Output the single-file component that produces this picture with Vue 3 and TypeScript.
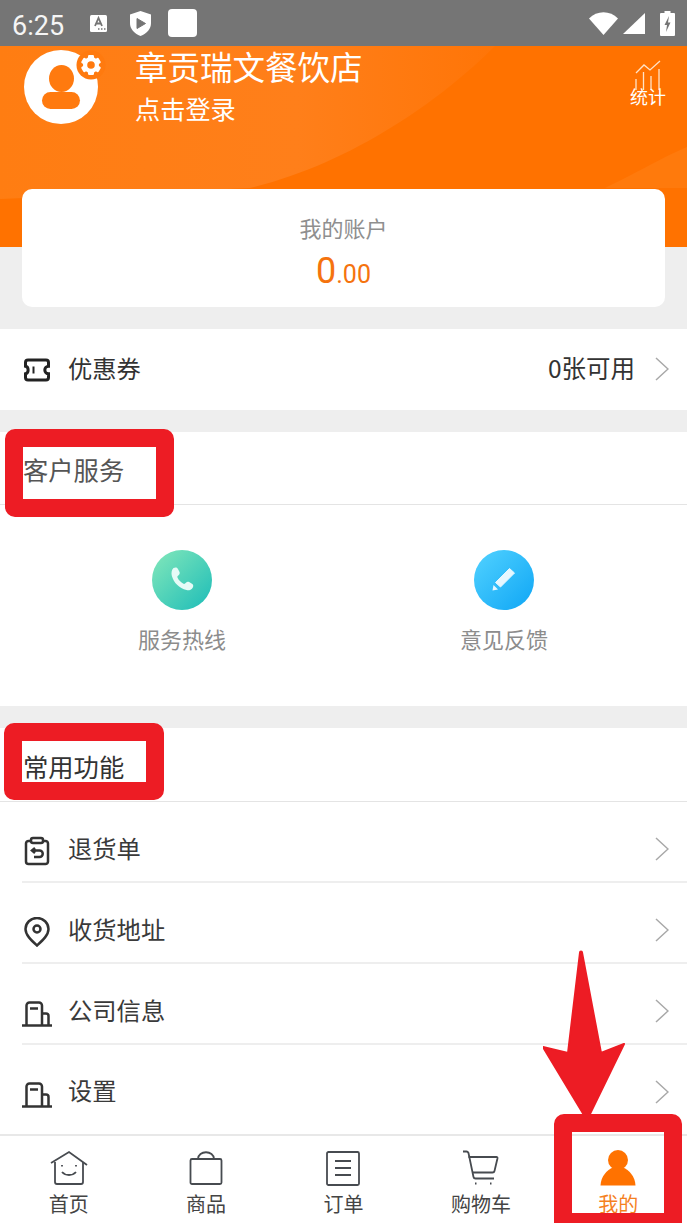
<template>
  <div class="page">
    <div class="status-bar">
      <span class="clock">6:25</span>
      <svg class="st-a" viewBox="0 0 17 17">
        <rect width="17" height="17" rx="1.5" fill="#fff" />
        <path d="M5 11 8.5 3 12 11M6.3 8.5h4.4" fill="none" stroke="#757575" stroke-width="1.8" />
        <path d="M8 14h1.5M11 14h1.5M14 14h1.5" stroke="#757575" stroke-width="1.4" />
      </svg>
      <svg class="st-shield" viewBox="0 0 21 25">
        <path d="M10.5 0 21 3.5V12c0 6-4 10.500-10.500 13C4 22.500 0 18 0 12V3.500z" fill="#fff" />
        <path d="M7 7.500 15.500 12.500 7 17.500z" fill="#757575" stroke="#757575" stroke-linejoin="round" />
      </svg>
      <span class="st-square"></span>
      <span class="status-space"></span>
      <svg class="st-wifi" viewBox="0 0 29 23"><path d="M0 6.500C8-2 21-2 29 6.500L14.500 23z" fill="#fff" /></svg>
      <svg class="st-signal" viewBox="0 0 22 21"><path d="M22 0v21H0z" fill="#fff" /></svg>
      <svg class="st-battery" viewBox="0 0 15 25">
        <path d="M4.500 0h6v2H14a1 1 0 0 1 1 1v21a1 1 0 0 1-1 1H1a1 1 0 0 1-1-1V3a1 1 0 0 1 1-1h3.500z" fill="#fff" />
        <path d="M9 5 4.500 14H7l-1 7 4.500-9.500H8z" fill="#757575" />
      </svg>
    </div>

    <header class="hero">
      <svg class="hero-bg" viewBox="0 0 687 201" preserveAspectRatio="none">
        <defs>
          <linearGradient id="heroLight" x1="0" y1="0" x2="1" y2="0">
            <stop offset="0" stop-color="#ff7d12" />
            <stop offset="0.6" stop-color="#ff7f1a" />
            <stop offset="1" stop-color="#ff7507" />
          </linearGradient>
        </defs>
        <path d="M0 0H495C440 55 350 118 250 142L0 153z" fill="url(#heroLight)" />
        <path d="M605 142C640 125 665 110 687 101V142z" fill="#ff7a0c" />
      </svg>
      <div class="hero-row">
        <svg class="avatar" viewBox="0 0 84 74">
          <circle cx="37" cy="37" r="37" fill="#fff" />
          <ellipse cx="37.500" cy="28.500" rx="12.500" ry="13.500" fill="#ff7a0f" />
          <rect x="18" y="42" width="38" height="17" rx="8.500" fill="#ff7a0f" />
          <circle cx="67" cy="15" r="14.500" fill="#ff7a0f" />
          <g fill="#fff">
            <circle cx="67" cy="15" r="8" />
            <rect x="64" y="5" width="6" height="20" rx="1.200" />
            <rect x="64" y="5" width="6" height="20" rx="1.200" transform="rotate(60 67 15)" />
            <rect x="64" y="5" width="6" height="20" rx="1.200" transform="rotate(120 67 15)" />
          </g>
          <circle cx="67" cy="15" r="3.800" fill="#ff7a0f" />
        </svg>
        <div class="hero-text">
          <div class="shop-name">章贡瑞文餐饮店</div>
          <div class="login">点击登录</div>
        </div>
        <div class="stats">
          <svg class="stats-icon" viewBox="0 0 26 30" fill="none" stroke="#ffe3c8" stroke-width="1.300">
            <path d="M1 13 9 5l6 5L25 1" />
            <path d="M1 19v11M8.500 12v18M16 16v14M24 9v21" />
          </svg>
          <span class="stats-label">统计</span>
        </div>
      </div>
    </header>

    <section class="account-card">
      <div class="account-title">我的账户</div>
      <div class="account-amount">0<small>.00</small></div>
    </section>

    <div class="coupon-row">
      <svg class="row-icon" viewBox="0 0 30 26" fill="none" stroke="#222" stroke-width="3">
        <path d="M6 3h18a2.500 2.500 0 0 1 2.500 2.500v3.800a3.700 3.700 0 0 0 0 7.400v3.800A2.500 2.500 0 0 1 24 23H6a2.500 2.500 0 0 1-2.500-2.500v-3.800c3.500-.5 3.500-6.900 0-7.400V5.500A2.500 2.500 0 0 1 6 3z" />
        <path d="M11.500 9.500v7" stroke-width="2" />
      </svg>
      <span class="row-label">优惠券</span>
      <span class="coupon-count">0张可用</span>
      <svg class="chevron" viewBox="0 0 14 24"><path d="M1 1l12 11L1 23" /></svg>
    </div>

    <section class="panel">
      <h3 class="panel-title">客户服务</h3>
      <div class="services">
        <div class="service">
          <span class="service-icon phone">
            <svg viewBox="0 0 30 30"><path d="M7.500 4.500c1.500-1 3-.8 3.800.6l1.400 2.700c.5 1 .3 2-.5 2.700l-1 1c-.4.400-.4.900-.2 1.400 1 2.300 3 4.300 5.300 5.500.5.200 1 .1 1.400-.3l1-1c.7-.7 1.700-.8 2.600-.3l2.500 1.500c1.300.8 1.500 2.300.5 3.700-1.200 1.700-3.300 2.500-5.300 1.900C12.500 22.300 7.700 17.500 6 11.300c-.6-2.300-.2-5.200 1.500-6.800z" fill="#e6fbf7" /></svg>
          </span>
          <span class="service-label">服务热线</span>
        </div>
        <div class="service">
          <span class="service-icon pen">
            <svg viewBox="0 0 30 30"><path d="M20.500 3.500 25.500 8 11.500 22 6.500 17.500z" fill="#e6f7ff" stroke="#e6f7ff" stroke-linejoin="round" /><path d="M4.500 20l4.500 4.500-5.500 1z" fill="#e6f7ff" /></svg>
          </span>
          <span class="service-label">意见反馈</span>
        </div>
      </div>
    </section>

    <section class="panel panel-functions">
      <h3 class="panel-title dark">常用功能</h3>
      <div v-for="row in rows" :key="row.label" class="func-row">
        <svg class="row-icon" viewBox="0 0 30 30" fill="none" stroke="#333" stroke-width="2.500">
          <path v-for="d in row.paths" :key="d" :d="d" />
        </svg>
        <span class="row-label">{{ row.label }}</span>
        <svg class="chevron" viewBox="0 0 14 24"><path d="M1 1l12 11L1 23" /></svg>
      </div>
    </section>

    <nav class="tabbar">
      <div v-for="tab in tabs" :key="tab.label" class="tab">
        <svg class="tab-icon" viewBox="0 0 40 36" fill="none" stroke="#474b50" stroke-width="1.800">
          <path v-for="d in tab.paths" :key="d" :d="d" />
        </svg>
        <span class="tab-label">{{ tab.label }}</span>
      </div>
      <div class="tab active">
        <svg class="tab-icon" viewBox="0 0 40 36">
          <circle cx="20" cy="10" r="10" fill="#ff7200" />
          <path d="M2.500 35.500C3 26 9 20 15 17.500h10C31 20 37 26 37.500 35.500z" fill="#ff7200" />
        </svg>
        <span class="tab-label">我的</span>
      </div>
    </nav>

    <!-- red annotations drawn over the screenshot -->
    <div class="mark mark-service"></div>
    <div class="mark mark-functions"></div>
    <div class="mark mark-mine"></div>
    <svg class="mark-arrow" viewBox="0 0 90 175">
      <path d="M37 2.500 25 103 0 97 44 170 81 94 58 103 39 2.500a1 1 0 0 0-2 0z" fill="#ed1c24" stroke="#ed1c24" stroke-width="2" stroke-linejoin="round" />
    </svg>
  </div>
</template>

<script setup lang="ts">
interface Item {
  label: string
  paths: string[]
}

const building = [
  'M0 27.500h30',
  'M4.500 27V7.500a3 3 0 0 1 3-3h9.500a3 3 0 0 1 3 3V27',
  'M8 10.500h8',
  'M20 15.500h4a2.500 2.500 0 0 1 2.500 2.500v9',
]

const rows: Item[] = [
  {
    label: '退货单',
    paths: [
      'M9 5H6.500A2.500 2.500 0 0 0 4 7.500v18A2.500 2.500 0 0 0 6.500 28h17a2.500 2.500 0 0 0 2.500-2.500v-18A2.500 2.500 0 0 0 23.500 5H21',
      'M11 2h8a2 2 0 0 1 2 2v1a2 2 0 0 1-2 2h-8a2 2 0 0 1-2-2V4a2 2 0 0 1 2-2z',
      'M13 12l-3 2.500 3 2.500M10.500 14.500h7a3.200 3.200 0 0 1 0 6.500H12',
    ],
  },
  {
    label: '收货地址',
    paths: [
      'M15 28.500C9 23 3.500 18 3.500 12a11.500 11 0 0 1 23 0c0 6-5.500 11-11.500 16.500z',
      'M15 8.500a3.500 3.500 0 1 1 0 7 3.500 3.500 0 0 1 0-7z',
    ],
  },
  { label: '公司信息', paths: building },
  { label: '设置', paths: building },
]

const tabs: Item[] = [
  {
    label: '首页',
    paths: [
      'M2 13 20 2l18 13',
      'M6 12v20a2 2 0 0 0 2 2h24a2 2 0 0 0 2-2V12',
      'M13 15v1.500M27 15v1.500',
      'M13 22c3.500 4 10.500 4 14 0',
    ],
  },
  {
    label: '商品',
    paths: [
      'M6 9h28a1.500 1.500 0 0 1 1.500 1.500v22a1.500 1.500 0 0 1-1.500 1.500H6a1.500 1.500 0 0 1-1.500-1.500v-22A1.500 1.500 0 0 1 6 9z',
      'M12 9c0-9 16-9 16 0',
    ],
  },
  {
    label: '订单',
    paths: [
      'M5.500 2h29a1.500 1.500 0 0 1 1.500 1.500v30a1.500 1.500 0 0 1-1.500 1.500h-29A1.500 1.500 0 0 1 4 33.500v-30A1.500 1.500 0 0 1 5.500 2z',
      'M12 11h16M12 18h16M12 25h16',
    ],
  },
  {
    label: '购物车',
    paths: [
      'M2 1.500h3.500c1 0 1.500.5 2 1.500l5 24c.2 1 1 1.500 2 1.500H33',
      'M7.500 7h28a1 1 0 0 1 1 1.200L33.500 21c-.2 1-1 1.500-2 1.500H11',
      'M14 33.500h1.500M29 33.500h1.500',
    ],
  },
]
</script>

<style>
html,
body {
  margin: 0;
  background: #eee;
}
</style>

<style scoped>
.page {
  position: relative;
  display: flex;
  flex-direction: column;
  width: 687px;
  height: 1223px;
  overflow: hidden;
  background: #eee;
  font-family: 'Noto Sans CJK SC', 'Noto Sans', sans-serif;
}

.status-bar {
  display: flex;
  flex: none;
  align-items: center;
  height: 46px;
  padding: 0 12px;
  box-sizing: border-box;
  background: #757575;
}

.clock {
  width: 78px;
  margin: 5px 0 0 0;
  color: #f5f5f5;
  font-family: Roboto, sans-serif;
  font-size: 27px;
  line-height: 32px;
}

.st-a {
  width: 17px;
  height: 17px;
}

.st-shield {
  width: 21px;
  height: 25px;
  margin-left: 23px;
}

.st-square {
  width: 29px;
  height: 28px;
  margin-left: 17px;
  border-radius: 4px;
  background: #fff;
}

.status-space {
  flex: 1;
}

.st-wifi {
  width: 29px;
  height: 23px;
}

.st-signal {
  width: 22px;
  height: 21px;
  margin-left: 5px;
}

.st-battery {
  width: 15px;
  height: 25px;
  margin-left: 15px;
}

.hero {
  position: relative;
  flex: none;
  height: 201px;
  background: #ff7200;
}

.hero-bg {
  position: absolute;
  inset: 0;
  width: 100%;
  height: 100%;
}

.hero-row {
  position: relative;
  display: flex;
  align-items: flex-start;
  padding: 4px 21px 0 24px;
}

.avatar {
  flex: none;
  width: 84px;
  height: 74px;
}

.hero-text {
  flex: 1;
  margin: -6px 0 0 27px;
  color: #fff;
}

.shop-name {
  font-size: 32.500px;
  line-height: 44px;
}

.login {
  margin-top: 2px;
  font-size: 25.200px;
  line-height: 36px;
}

.stats {
  display: flex;
  flex-direction: column;
  align-items: center;
  margin-top: 10px;
}

.stats-icon {
  width: 26px;
  height: 30px;
}

.stats-label {
  margin-top: -7px;
  color: #fff;
  font-size: 18px;
  line-height: 26px;
}

.account-card {
  position: relative;
  flex: none;
  height: 118px;
  margin: -58px 22px 22px;
  border-radius: 10px;
  background: #fff;
  text-align: center;
}

.account-title {
  padding-top: 22px;
  color: #8f8f8f;
  font-size: 22px;
  line-height: 32px;
}

.account-amount {
  margin-top: 5px;
  color: #f5730e;
  font-family: Roboto, sans-serif;
  font-size: 36px;
  line-height: 46px;
}

.account-amount small {
  font-size: 25px;
}

.coupon-row {
  display: flex;
  flex: none;
  align-items: center;
  height: 81px;
  padding: 0 18px 0 22px;
  box-sizing: border-box;
  background: #fff;
}

.row-icon {
  flex: none;
  width: 30px;
  height: 30px;
  margin-right: 16px;
}

.row-label {
  flex: 1;
  margin-bottom: 4px;
  color: #333;
  font-size: 24.300px;
}

.coupon-count {
  margin: 0 20px 4px 0;
  color: #333;
  font-size: 24.500px;
}

.chevron {
  flex: none;
  width: 14px;
  height: 24px;
  margin-bottom: 2px;
  fill: none;
  stroke: #a8a8a8;
  stroke-width: 1.500;
}

.panel {
  flex: none;
  margin-top: 22px;
  background: #fff;
}

.panel-functions {
  display: flex;
  flex: 1;
  flex-direction: column;
}

.panel-title {
  height: 73px;
  margin: 0;
  padding-left: 23px;
  border-bottom: 1px solid #e4e4e4;
  box-sizing: border-box;
  color: #555;
  font-size: 25.300px;
  font-weight: 400;
  line-height: 75px;
}

.panel-title.dark {
  flex: none;
  height: 74px;
  color: #333;
  line-height: 77px;
}

.services {
  display: grid;
  grid-template-columns: 322px 322px;
  height: 201px;
  padding-left: 21px;
  box-sizing: border-box;
}

.service {
  display: flex;
  flex-direction: column;
  align-items: center;
  padding-top: 45px;
}

.service-icon {
  display: flex;
  align-items: center;
  justify-content: center;
  width: 60px;
  height: 60px;
  border-radius: 50%;
}

.service-icon svg {
  width: 30px;
  height: 30px;
}

.phone svg {
  width: 34px;
  height: 34px;
}

.phone {
  background: linear-gradient(135deg, #84e8ba, #1cbcb8);
}

.pen {
  background: linear-gradient(135deg, #52d2ff, #0fa6f5);
}

.service-label {
  margin-top: 12px;
  color: #8c8c8c;
  font-size: 22px;
  line-height: 32px;
}

.func-row {
  display: flex;
  flex: none;
  align-items: center;
  height: 81px;
  margin-left: 22px;
  padding: 15px 18px 0 0;
  border-bottom: 2px solid #eee;
  box-sizing: border-box;
}

.func-row .row-icon {
  margin-top: 4px;
}

.func-row .chevron {
  margin-bottom: 0;
}

.func-row:last-child {
  flex: 1;
  padding-top: 4px;
  border-bottom: none;
}

.func-row .row-label {
  color: #3a3a3a;
}

.tabbar {
  display: grid;
  flex: none;
  grid-template-columns: repeat(5, 1fr);
  height: 89px;
  border-top: 2px solid #e8e8e8;
  box-sizing: border-box;
  background: #fff;
}

.tab {
  display: flex;
  flex-direction: column;
  align-items: center;
  padding-top: 14px;
}

.tab-icon {
  width: 40px;
  height: 36px;
}

.tab-label {
  margin-top: 4px;
  color: #444;
  font-size: 20px;
  line-height: 28px;
}

.tab.active .tab-label {
  color: #f5811f;
}

.mark {
  position: absolute;
  border: 18px solid #ed1c24;
  border-radius: 10px;
  box-sizing: border-box;
}

.mark-service {
  left: 5px;
  top: 429px;
  width: 169px;
  height: 88px;
}

.mark-functions {
  left: 4px;
  top: 723px;
  width: 160px;
  height: 77px;
}

.mark-mine {
  left: 554px;
  top: 1114px;
  width: 128px;
  height: 119px;
  border-bottom-width: 20px;
}

.mark-arrow {
  position: absolute;
  left: 543px;
  top: 950px;
  width: 90px;
  height: 175px;
}
</style>
